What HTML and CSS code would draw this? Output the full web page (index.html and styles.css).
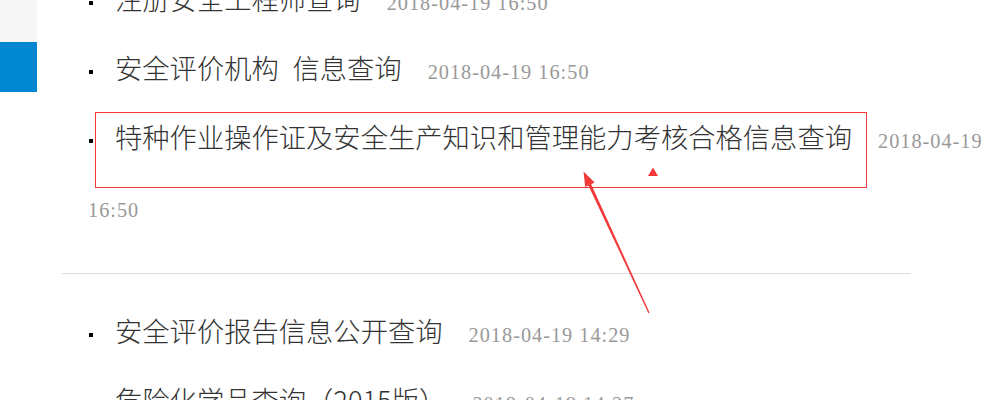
FILE: index.html
```html
<!DOCTYPE html>
<html lang="zh-CN">
<head>
    <meta charset="UTF-8">
    <meta name="viewport" content="width=device-width, initial-scale=1.0">
    <title>查询服务</title>
    <link rel="stylesheet" href="styles.css">
</head>
<body>
    <!-- 左侧浮动标签 -->
    <div class="side-tab">
        <div class="tab-top"></div>
        <div class="tab-active"></div>
    </div>

    <div class="page">
        <ul class="news">
            <li><a href="#">注册安全工程师查询</a><span class="date">2018-04-19 16:50</span></li>
            <li><a href="#">安全评价机构&ensp;信息查询</a><span class="date">2018-04-19 16:50</span></li>
            <li><a href="#">特种作业操作证及安全生产知识和管理能力考核合格信息查询</a><span class="date">2018-04-19 16:50</span></li>
        </ul>

        <hr class="sep">

        <ul class="news">
            <li><a href="#">安全评价报告信息公开查询</a><span class="date">2018-04-19 14:29</span></li>
            <li><a href="#">危险化学品查询（2015版）</a><span class="date">2018-04-19 14:27</span></li>
        </ul>
    </div>

    <!-- 标注层 -->
    <svg class="annot" width="1001" height="400" viewBox="0 0 1001 400">
        <rect x="95.5" y="112.5" width="771" height="75" fill="none" stroke="#f23a3a" stroke-width="1"/>
        <polygon points="648,176 653,167.5 658,176" fill="#f23a3a"/>
        <polygon points="583.5,171.5 594.6,182.4 591.2,184.2 649.6,312.8 648.4,313.2 588.4,185.4 585.2,187.1" fill="#f23a3a"/>
    </svg>
</body>
</html>
```

FILE: styles.css
```css
body {
    margin: 0;
    padding: 0;
    background-color: #fff;
    font-family: "Noto Sans CJK SC", "Noto Sans", sans-serif;
    overflow: hidden;
}
.side-tab {
    position: fixed;
    left: 0;
    top: 0;
    width: 37px;
}
.tab-top {
    height: 42px;
    background-color: #f7f7f7;
}
.tab-active {
    height: 50px;
    background-color: #0288d1;
}
.page {
    margin-top: -36px;
    padding-left: 62px;
}
.news {
    list-style: none;
    margin: 0;
    padding: 0 0 0 26px;
}
.news li {
    font-size: 27.3px;
    line-height: 69px;
    color: #333;
}
.news li::before {
    content: "";
    display: inline-block;
    width: 4px;
    height: 4px;
    background-color: #000;
    vertical-align: middle;
    margin: 0 22px 0 1px;
}
.news a {
    color: #333;
    text-decoration: none;
    font-weight: 300;
}
.date {
    font-family: "Liberation Serif", serif;
    font-size: 20.3px;
    line-height: 1;
    letter-spacing: 1px;
    color: #999;
    margin-left: 26px;
}
.sep {
    width: 849px;
    margin: 33px 0 22px 0;
    border: none;
    border-top: 1px solid #ddd;
}
.annot {
    position: absolute;
    left: 0;
    top: 0;
    pointer-events: none;
}
```
